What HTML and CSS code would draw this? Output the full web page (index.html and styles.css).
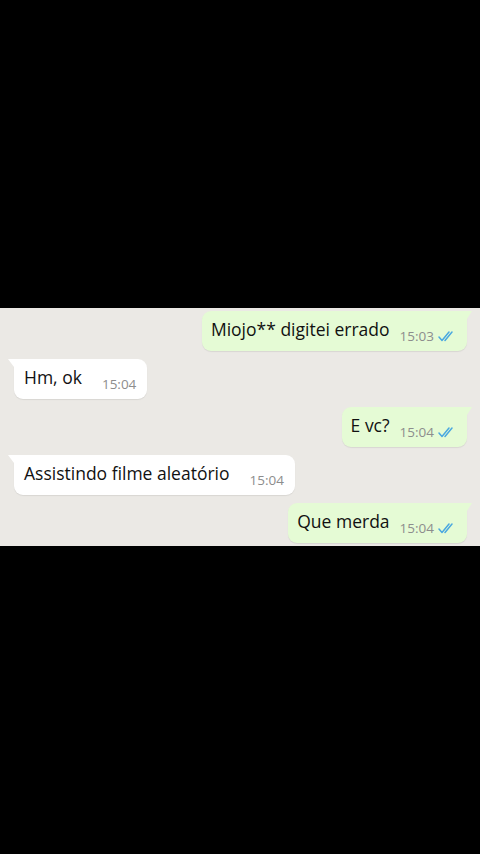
FILE: index.html
```html
<!DOCTYPE html>
<html>
<head>
    <title>Conversa</title>
    <link rel="stylesheet" href="styles.css">
</head>
<body>
    <div class="chat">
        <div class="row out">
            <div class="bubble">
                <span class="text">Miojo** digitei errado</span>
                <span class="meta">15:03
                    <svg class="ticks" viewBox="0 0 18 12"><path d="M1 7l3 3.5L11 2M7 10.5L14 2" fill="none" stroke="currentColor" stroke-width="1.5" stroke-linecap="round" stroke-linejoin="round"/></svg>
                </span>
            </div>
        </div>
        <div class="row in">
            <div class="bubble">
                <span class="text">Hm, ok</span>
                <span class="meta">15:04</span>
            </div>
        </div>
        <div class="row out">
            <div class="bubble">
                <span class="text">E vc?</span>
                <span class="meta">15:04
                    <svg class="ticks" viewBox="0 0 18 12"><path d="M1 7l3 3.5L11 2M7 10.5L14 2" fill="none" stroke="currentColor" stroke-width="1.5" stroke-linecap="round" stroke-linejoin="round"/></svg>
                </span>
            </div>
        </div>
        <div class="row in">
            <div class="bubble">
                <span class="text">Assistindo filme aleatório</span>
                <span class="meta">15:04</span>
            </div>
        </div>
        <div class="row out">
            <div class="bubble">
                <span class="text">Que merda</span>
                <span class="meta">15:04
                    <svg class="ticks" viewBox="0 0 18 12"><path d="M1 7l3 3.5L11 2M7 10.5L14 2" fill="none" stroke="currentColor" stroke-width="1.5" stroke-linecap="round" stroke-linejoin="round"/></svg>
                </span>
            </div>
        </div>
    </div>
</body>
</html>
```
FILE: styles.css
```css
html, body {
    margin: 0;
    background-color: #000;
}
body {
    font-family: "Open Sans", "DejaVu Sans", sans-serif;
    height: 854px;
    padding-top: 308px;
    box-sizing: border-box;
}
.chat {
    height: 238px;
    background-color: #ebe9e5;
    padding: 3px 13px 0 14px;
    box-sizing: border-box;
    display: flex;
    flex-direction: column;
    gap: 8px;
}
.row {
    display: flex;
}
.row.out {
    justify-content: flex-end;
}
.bubble {
    position: relative;
    height: 40px;
    box-sizing: border-box;
    display: flex;
    align-items: center;
    border-radius: 9px;
    box-shadow: 0 1px 1px rgba(0,0,0,0.08);
}
.in .bubble {
    background-color: #fff;
    padding: 0 11px 0 10px;
    border-top-left-radius: 0;
}
.out .bubble {
    background-color: #e5fbd5;
    padding: 0 11px 0 9px;
    border-top-right-radius: 0;
}
.in .bubble::before {
    content: "";
    position: absolute;
    top: 0;
    left: -6px;
    border-top: 8px solid #fff;
    border-left: 6px solid transparent;
}
.out .bubble::after {
    content: "";
    position: absolute;
    top: 0;
    right: -5px;
    border-top: 8px solid #e5fbd5;
    border-right: 5px solid transparent;
}
.text {
    font-size: 17.5px;
    color: #111;
    margin-top: -4px;
}
.meta {
    display: flex;
    align-items: center;
    gap: 4px;
    margin-left: 20px;
    margin-top: 9px;
    font-size: 13.5px;
    color: #8d8d8d;
}
.out .meta {
    margin-left: 10px;
}
.ticks {
    width: 18px;
    height: 12px;
    color: #4aa8e0;
}
```
